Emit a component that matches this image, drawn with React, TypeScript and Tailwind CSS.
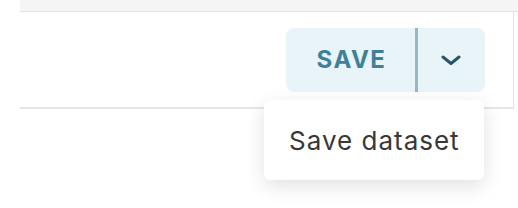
export default function App() {
  return (
    <div className="relative w-[518px] h-[208px] overflow-hidden bg-white" style={{ fontFamily: 'Inter, "Noto Sans", sans-serif' }}>
      <div className="ml-[20px] h-[12px] bg-[#f5f5f5] border-b border-[#e2e2e2]" />
      <div className="ml-[20px] mr-[4px] h-[97px] border-b-2 border-r border-[#e6e6e6] flex justify-end items-start pt-[16px] pr-[28px]">
        <div className="flex h-[64px] rounded-[8px] bg-[#e8f4f7]">
          <button className="w-[129px] flex items-center justify-center pl-[2px] text-[24px] font-bold text-[#3f8199] tracking-[1.5px]">
            SAVE
          </button>
          <div className="w-[3px] bg-[#94b9c5]" />
          <button className="w-[67px] flex items-center justify-center pr-[2px]">
            <svg width="20" height="10" viewBox="0 0 20 10" fill="none">
              <polyline points="2,2 10,8.5 18,2" stroke="#2b5668" strokeWidth="3" strokeLinecap="round" strokeLinejoin="round" />
            </svg>
          </button>
        </div>
      </div>
      <div className="absolute left-[264px] top-[100px] w-[220px] h-[80px] bg-white rounded-[6px] shadow-[0_6px_20px_rgba(0,0,0,0.12)] flex items-center pl-[25px]">
        <span className="text-[26px] tracking-[1px] text-[#383838]">Save dataset</span>
      </div>
    </div>
  );
}
